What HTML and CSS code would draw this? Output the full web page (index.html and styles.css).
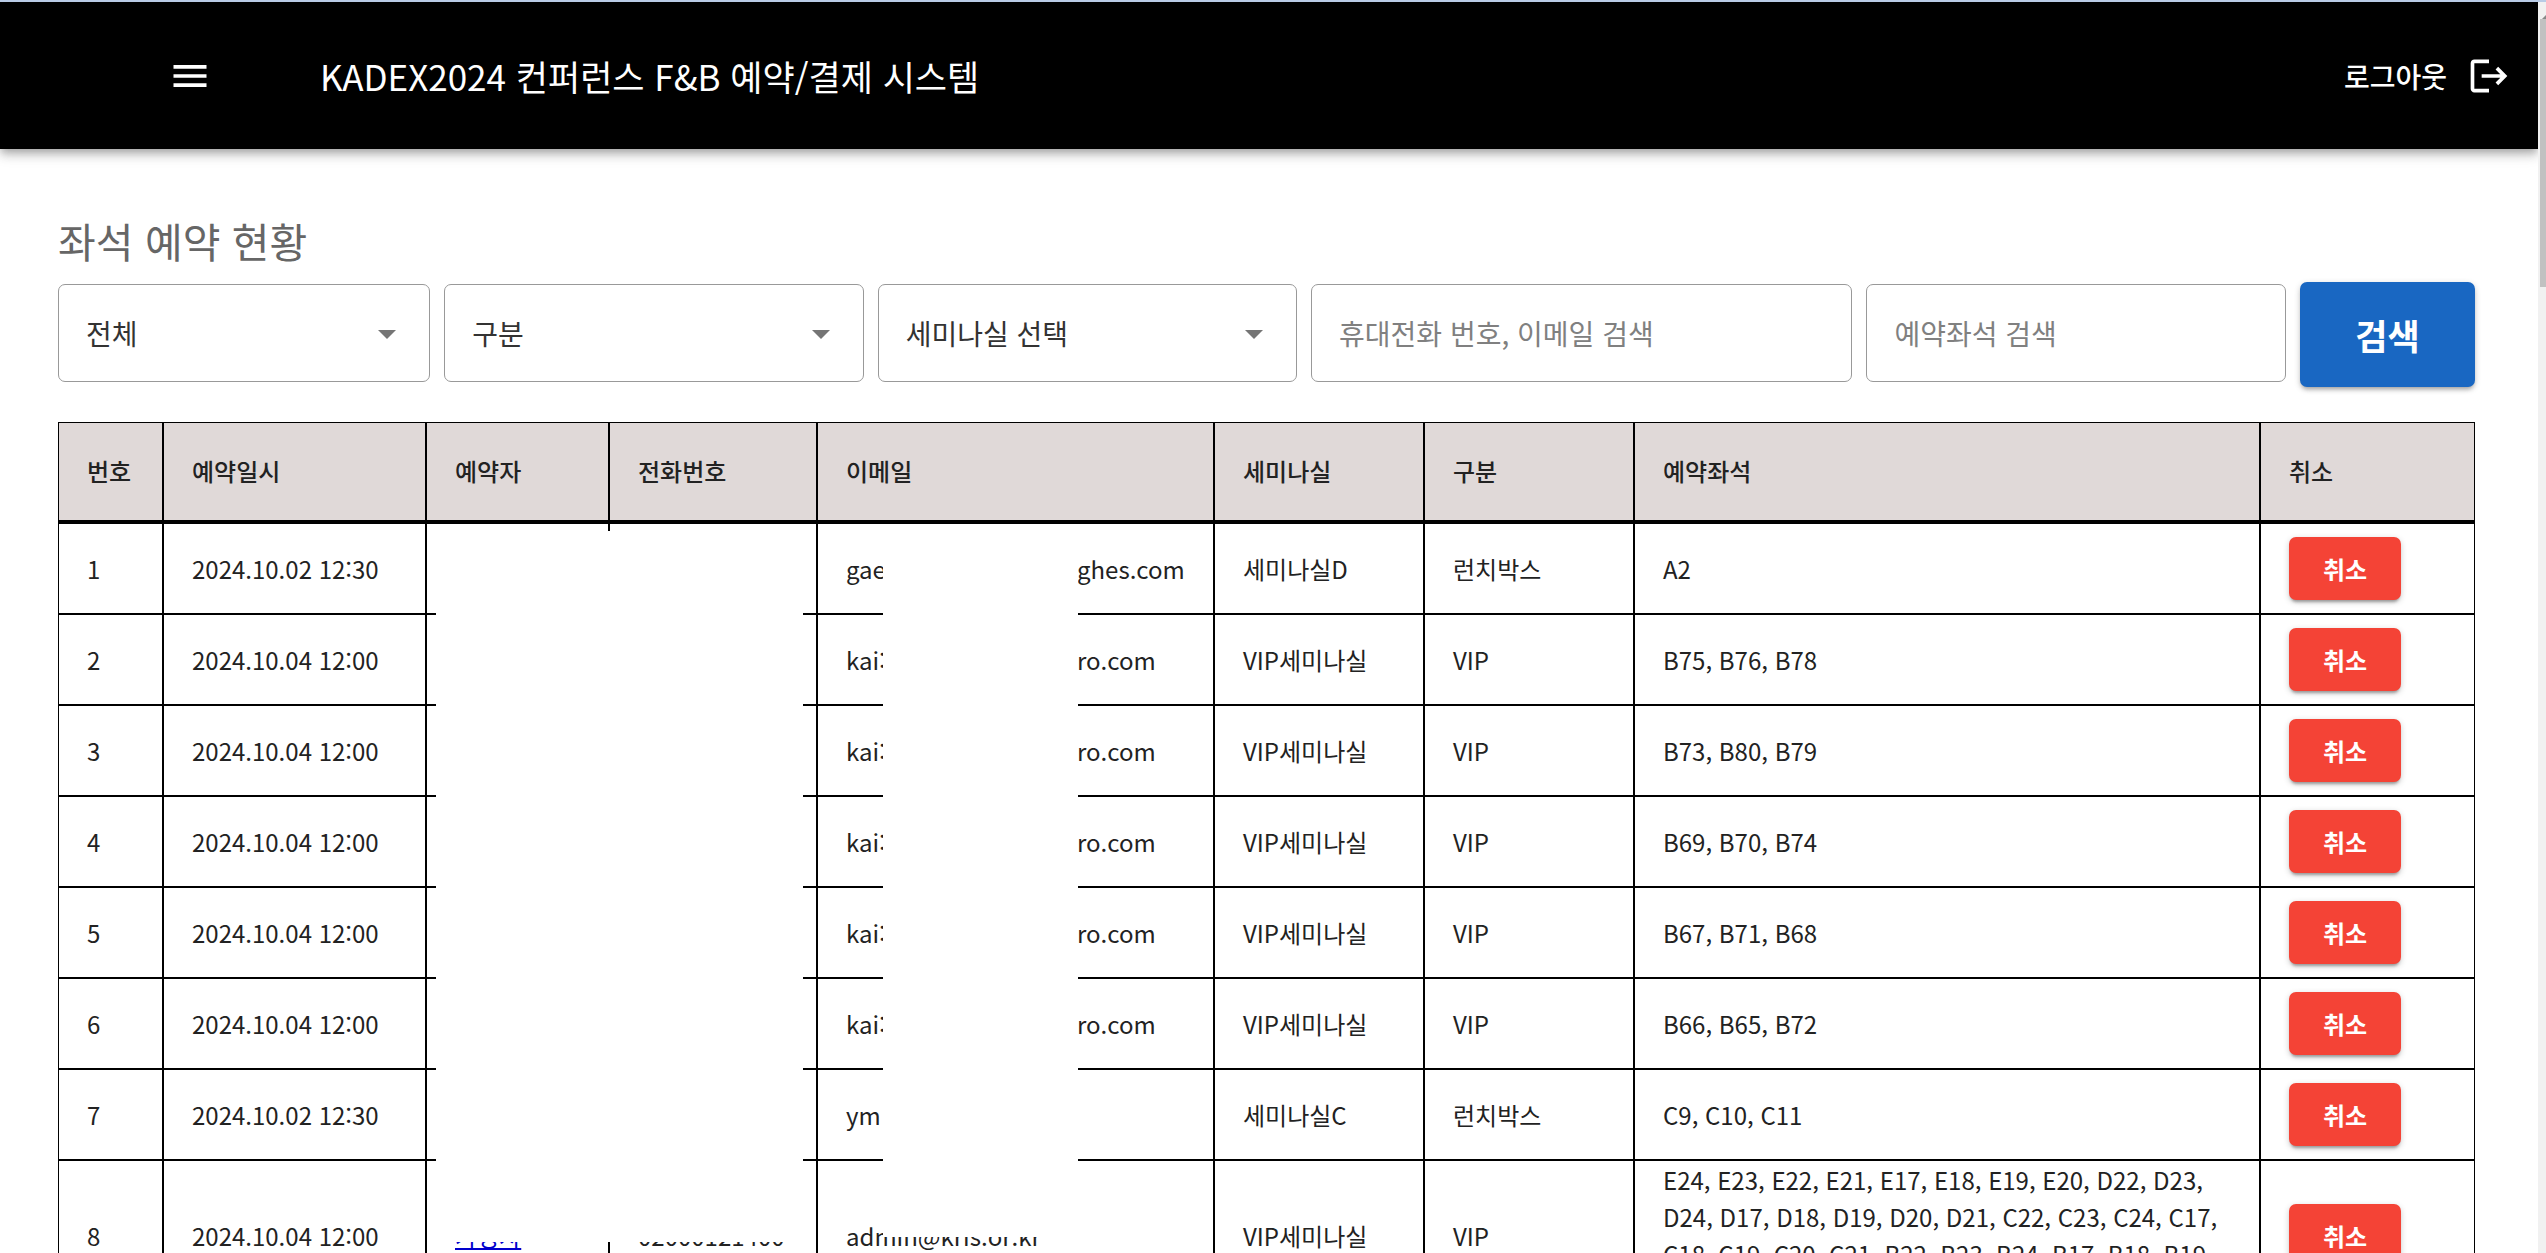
FILE: index.html
```
<!DOCTYPE html>
<html lang="ko">
<head>
    <meta charset="UTF-8">
    <meta name="viewport" content="width=device-width, initial-scale=1.0">
    <title>KADEX2024 컨퍼런스 F&amp;B 예약/결제 시스템</title>
    <link rel="stylesheet" href="styles.css">
</head>
<body>
    <div class="app">
        <div class="page">
            <header class="app-bar">
                <button type="button" class="menu-btn" aria-label="메뉴">
                    <svg class="icon" viewBox="0 0 24 24"><path d="M3 18h18v-2H3v2zm0-5h18v-2H3v2zm0-7v2h18V6H3z"/></svg>
                </button>
                <h1 class="title">KADEX2024 컨퍼런스 F&amp;B 예약/결제 시스템</h1>
                <button type="button" class="logout-btn">
                    로그아웃
                    <svg class="icon" viewBox="0 0 24 24"><path d="M17 7l-1.410 1.410L18.170 11H8v2h10.170l-2.580 2.580L17 17l5-5zM4 5h8V3H4c-1.100 0-2 .9-2 2v14c0 1.100.9 2 2 2h8v-2H4V5z"/></svg>
                </button>
            </header>

            <main class="content">
                <h2 class="heading">좌석 예약 현황</h2>

                <form class="filters">
                    <div class="select-wrap">
                        <select class="field" aria-label="전체">
                            <option>전체</option>
                        </select>
                    </div>
                    <div class="select-wrap">
                        <select class="field" aria-label="구분">
                            <option>구분</option>
                        </select>
                    </div>
                    <div class="select-wrap">
                        <select class="field" aria-label="세미나실 선택">
                            <option>세미나실 선택</option>
                        </select>
                    </div>
                    <input type="text" class="field" aria-label="휴대전화 번호, 이메일 검색" placeholder="휴대전화 번호, 이메일 검색">
                    <input type="text" class="field" aria-label="예약좌석 검색" placeholder="예약좌석 검색">
                    <button type="button" class="search-btn">검색</button>
                </form>

                <div class="table-wrap">
                    <table>
                        <colgroup>
                            <col class="col-no">
                            <col class="col-date">
                            <col class="col-name">
                            <col class="col-phone">
                            <col class="col-email">
                            <col class="col-room">
                            <col class="col-type">
                            <col class="col-seats">
                            <col class="col-cancel">
                        </colgroup>
                        <thead>
                            <tr>
                                <th>번호</th>
                                <th>예약일시</th>
                                <th>예약자</th>
                                <th>전화번호</th>
                                <th>이메일</th>
                                <th>세미나실</th>
                                <th>구분</th>
                                <th>예약좌석</th>
                                <th>취소</th>
                            </tr>
                        </thead>
                        <tbody>
                            <tr>
                                <td>1</td>
                                <td>2024.10.02 12:30</td>
                                <td></td>
                                <td></td>
                                <td><div class="email"><span class="head">gae</span><span>ghes.com</span></div></td>
                                <td>세미나실D</td>
                                <td>런치박스</td>
                                <td>A2</td>
                                <td><button type="button" class="cancel-btn">취소</button></td>
                            </tr>
                            <tr>
                                <td>2</td>
                                <td>2024.10.04 12:00</td>
                                <td></td>
                                <td></td>
                                <td><div class="email"><span class="head">kai:</span><span>ro.com</span></div></td>
                                <td>VIP세미나실</td>
                                <td>VIP</td>
                                <td>B75, B76, B78</td>
                                <td><button type="button" class="cancel-btn">취소</button></td>
                            </tr>
                            <tr>
                                <td>3</td>
                                <td>2024.10.04 12:00</td>
                                <td></td>
                                <td></td>
                                <td><div class="email"><span class="head">kai:</span><span>ro.com</span></div></td>
                                <td>VIP세미나실</td>
                                <td>VIP</td>
                                <td>B73, B80, B79</td>
                                <td><button type="button" class="cancel-btn">취소</button></td>
                            </tr>
                            <tr>
                                <td>4</td>
                                <td>2024.10.04 12:00</td>
                                <td></td>
                                <td></td>
                                <td><div class="email"><span class="head">kai:</span><span>ro.com</span></div></td>
                                <td>VIP세미나실</td>
                                <td>VIP</td>
                                <td>B69, B70, B74</td>
                                <td><button type="button" class="cancel-btn">취소</button></td>
                            </tr>
                            <tr>
                                <td>5</td>
                                <td>2024.10.04 12:00</td>
                                <td></td>
                                <td></td>
                                <td><div class="email"><span class="head">kai:</span><span>ro.com</span></div></td>
                                <td>VIP세미나실</td>
                                <td>VIP</td>
                                <td>B67, B71, B68</td>
                                <td><button type="button" class="cancel-btn">취소</button></td>
                            </tr>
                            <tr>
                                <td>6</td>
                                <td>2024.10.04 12:00</td>
                                <td></td>
                                <td></td>
                                <td><div class="email"><span class="head">kai:</span><span>ro.com</span></div></td>
                                <td>VIP세미나실</td>
                                <td>VIP</td>
                                <td>B66, B65, B72</td>
                                <td><button type="button" class="cancel-btn">취소</button></td>
                            </tr>
                            <tr>
                                <td>7</td>
                                <td>2024.10.02 12:30</td>
                                <td></td>
                                <td></td>
                                <td><div class="email"><span class="head">ym</span></div></td>
                                <td>세미나실C</td>
                                <td>런치박스</td>
                                <td>C9, C10, C11</td>
                                <td><button type="button" class="cancel-btn">취소</button></td>
                            </tr>
                            <tr>
                                <td>8</td>
                                <td>2024.10.04 12:00</td>
                                <td><a href="#">가명자</a></td>
                                <td>02000121400</td>
                                <td>admin@kris.or.kr</td>
                                <td>VIP세미나실</td>
                                <td>VIP</td>
                                <td>E24, E23, E22, E21, E17, E18, E19, E20, D22, D23, D24, D17, D18, D19, D20, D21, C22, C23, C24, C17, C18, C19, C20, C21, B22, B23, B24, B17, B18, B19, B20, B21</td>
                                <td><button type="button" class="cancel-btn">취소</button></td>
                            </tr>
                        </tbody>
                    </table>
                    <!-- personal data is blanked out -->
                    <div class="mask mask-person"></div>
                    <div class="mask mask-email"></div>
                </div>
            </main>
        </div>

        <div class="scrollbar">
            <div class="scroll-up"></div>
            <div class="scroll-thumb"></div>
        </div>
    </div>
</body>
</html>
```
FILE: styles.css
```
* {
    box-sizing: border-box;
}
body {
    margin: 0;
    font-family: "Noto Sans CJK KR", "Noto Sans", sans-serif;
    font-size: 24px;
    line-height: 37px;
    color: #222;
    background: #fff;
}
button, input, select {
    font-family: inherit;
}
.app {
    display: flex;
    height: 100vh;
    overflow: hidden;
    border-top: 2px solid #b9cbe6;
}
.page {
    flex: 1;
    min-width: 0;
    overflow: hidden;
}

/* top bar */
.app-bar {
    display: flex;
    align-items: center;
    height: 147px;
    padding: 0 27px 0 168px;
    background: #000;
    color: #fff;
    box-shadow: 0 4px 7px -2px rgba(0,0,0,0.2), 0 7px 9px rgba(0,0,0,0.14), 0 2px 18px rgba(0,0,0,0.12);
}
.icon {
    display: block;
    width: 44px;
    height: 44px;
    fill: currentColor;
}
.menu-btn, .logout-btn {
    display: flex;
    align-items: center;
    padding: 0;
    border: none;
    background: none;
    color: inherit;
    cursor: pointer;
}
.title {
    flex: 1;
    margin: 0 0 0 108px;
    font-size: 35px;
    font-weight: 400;
}
.logout-btn {
    gap: 20px;
    font-size: 28px;
    font-weight: 500;
}

.content {
    padding: 60px 63px 0 58px;
}
.heading {
    margin: 0 0 11px;
    font-size: 41px;
    line-height: 62px;
    font-weight: 400;
    color: #666;
}

/* filters */
.filters {
    display: grid;
    grid-template-columns: 372fr 419fr 419fr 541fr 419fr 175fr;
    gap: 14px;
    margin-bottom: 35px;
}
.field {
    width: 100%;
    min-width: 0;
    height: 98px;
    padding: 0 27px;
    border: 1px solid #999;
    border-radius: 7px;
    background: #fff;
    color: #333;
    font-size: 28px;
    appearance: none;
}
.filters > .field {
    margin-top: 2px;
}
.field::placeholder {
    color: #808080;
    opacity: 1;
}
.select-wrap {
    position: relative;
    margin-top: 2px;
}
.select-wrap::after {
    content: "";
    position: absolute;
    top: 46px;
    right: 34px;
    border: 9px solid transparent;
    border-top-color: #757575;
    border-bottom: none;
    pointer-events: none;
}
.search-btn {
    height: 105px;
    border: none;
    border-radius: 7px;
    background: #1967c2;
    color: #fff;
    font-size: 35px;
    font-weight: 700;
    box-shadow: 0 4px 4px -2px rgba(0,0,0,0.25), 0 2px 6px rgba(0,0,0,0.2);
    cursor: pointer;
}

/* reservation table */
.table-wrap {
    position: relative;
}
table {
    width: 100%;
    table-layout: fixed;
    border-collapse: separate;
    border-spacing: 0;
}
.col-no { width: 105px; }
.col-date { width: 263px; }
.col-name { width: 183px; }
.col-phone { width: 208px; }
.col-email { width: 397px; }
.col-room { width: 210px; }
.col-type { width: 210px; }
.col-seats { width: 626px; }
.col-cancel { width: 215px; }
th, td {
    height: 91px;
    padding: 0 28px;
    border: 1px solid #000;
    text-align: left;
    vertical-align: middle;
}
th {
    height: 101px;
    padding-bottom: 2px;
    border-bottom-width: 3px;
    background: #e0d9d8;
    font-weight: 500;
}
td a {
    color: #00c;
}
.email {
    display: flex;
}
.email .head {
    width: 231px;
}
.cancel-btn {
    display: block;
    width: 112px;
    height: 63px;
    padding: 0;
    border: none;
    border-radius: 7px;
    background: #f44336;
    color: #fff;
    font-size: 24px;
    font-weight: 700;
    box-shadow: 0 4px 3px -2px rgba(0,0,0,0.3), 0 2px 6px rgba(0,0,0,0.2);
    cursor: pointer;
}
.mask {
    position: absolute;
    background: #fff;
}
.mask-person {
    top: 109px;
    left: 378px;
    width: 367px;
    height: 711px;
}
.mask-email {
    top: 137px;
    left: 825px;
    width: 195px;
    height: 678px;
}

/* scrollbar */
.scrollbar {
    width: 8px;
    padding-left: 2px;
    overflow: hidden;
    background: #f1f1f1;
}
.scroll-up {
    width: 0;
    height: 17px;
    margin-left: 2px;
    border: 6px solid transparent;
    border-top-width: 5px;
    border-bottom-color: #888;
}
.scroll-thumb {
    height: 268px;
    background: #c1c1c1;
}
```
